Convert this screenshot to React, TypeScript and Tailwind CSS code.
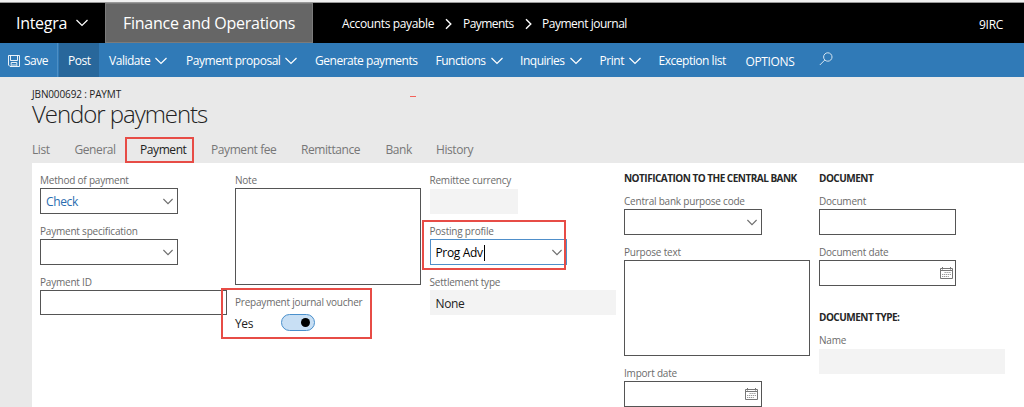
import type { ReactNode } from 'react';

function Chevron() {
  return (
    <svg viewBox="0 0 12 8" className="h-2 w-3 shrink-0" fill="none" stroke="currentColor" strokeWidth="1.2">
      <path d="M.5 1 6 6.5 11.5 1" />
    </svg>
  );
}

function FieldChevron() {
  return (
    <svg viewBox="0 0 10 7" className="mr-px h-[7px] w-[10px] shrink-0 text-[#6e6e6e]" fill="none" stroke="currentColor" strokeWidth="1.1">
      <path d="M.4 1 5 5.6 9.6 1" />
    </svg>
  );
}

function CrumbArrow() {
  return (
    <svg viewBox="0 0 7 12" className="h-3 w-[7px] shrink-0" fill="none" stroke="currentColor" strokeWidth="1.4">
      <path d="M1 1.2 5.8 6 1 10.8" />
    </svg>
  );
}

function FloppyIcon() {
  return (
    <svg viewBox="0 0 12 12" className="h-3 w-3 shrink-0" fill="none" stroke="currentColor" strokeWidth=".9">
      <path d="M.5.5h11v11h-9.5L.5 10z" />
      <path d="M2.5.5v5h7v-5M3.2 11.5v-4h5.6v4M5 9v2.5M7 9v2.5" />
    </svg>
  );
}

function CalendarIcon() {
  return (
    <svg viewBox="0 0 13 12" className="mb-px h-3 w-[13px] shrink-0 text-[#777]" fill="none" stroke="currentColor">
      <path d="M.5 1.5h12v10H.5z" strokeWidth="1" />
      <path d="M.5 3.5h12" strokeWidth="1" />
      <path d="M2.5 0v2.5M10.5 0v2.5" strokeWidth="1" />
      <path d="M4.5 5.5H11M2 7.5h9M2 9.5h6.8" strokeWidth="1.2" strokeDasharray="1.3 .7" opacity=".75" />
    </svg>
  );
}

function Label({ children }: { children: ReactNode }) {
  return <div className="h-4 whitespace-nowrap text-[10px] leading-4 tracking-[-0.21px] text-[#6b6b6b]">{children}</div>;
}

function Heading({ children }: { children: ReactNode }) {
  return <h2 className="h-[17px] whitespace-nowrap text-[10px] leading-[17px] font-bold tracking-[-0.51px] text-[#262626]">{children}</h2>;
}

function Field({ label, box, children }: { label: string; box: string; children?: ReactNode }) {
  return (
    <div>
      <Label>{label}</Label>
      <div className={`flex items-center justify-between text-[12px] leading-4 tracking-[-0.35px] ${box}`}>{children}</div>
    </div>
  );
}

const MENU = [
  { label: 'Validate', width: 'w-[77px]', chevron: true },
  { label: 'Payment proposal', width: 'w-[129px]', chevron: true },
  { label: 'Generate payments', width: 'w-[120.5px]', chevron: false },
  { label: 'Functions', width: 'w-[84.5px]', chevron: true },
  { label: 'Inquiries', width: 'w-[79.5px]', chevron: true },
  { label: 'Print', width: 'w-[59px]', chevron: true },
  { label: 'Exception list', width: 'w-[87px]', chevron: false },
  { label: 'OPTIONS', width: 'w-[73px] pt-0.5 tracking-[-0.35px]', chevron: false },
];

const TABS = [
  { label: 'List', width: 'w-[42.5px]' },
  { label: 'General', width: 'w-[65.5px]' },
  { label: 'Payment', width: 'w-[71px]', active: true },
  { label: 'Payment fee', width: 'w-[90px]' },
  { label: 'Remittance', width: 'w-[84.5px]' },
  { label: 'Bank', width: 'w-[50.5px]' },
  { label: 'History', width: 'w-[60px]' },
];

export default function App() {
  return (
    <div className="flex h-[407px] w-[1024px] flex-col overflow-hidden bg-[#e9e9e9] font-['Open_Sans','Noto_Sans',sans-serif]">
      <div className="h-[3px] shrink-0 border-b border-[#999] bg-[#f0f0f0]" />

      <header className="flex h-10 shrink-0 items-stretch bg-black text-white">
        <div className="flex w-[105px] items-center justify-between pr-[17px] pl-4 text-[16px] leading-5 tracking-[-0.3px]">
          Integra
          <Chevron />
        </div>
        <div className="flex w-52 items-center border border-[#7b7b7b] bg-[#666] pl-[17px] text-[16px] leading-5 tracking-[-0.25px] whitespace-nowrap">
          Finance and Operations
        </div>
        <nav className="flex grow items-center pt-px pl-[29px] text-[12px] whitespace-nowrap">
          <span className="w-[103px] tracking-[-0.37px]">Accounts payable</span>
          <CrumbArrow />
          <span className="ml-[11px] w-[62px] tracking-[-0.55px]">Payments</span>
          <CrumbArrow />
          <span className="ml-[10px] tracking-[-0.48px]">Payment journal</span>
        </nav>
        <div className="flex items-center pt-1 pr-[21px] text-[12px] tracking-[-0.3px]">9IRC</div>
      </header>

      <div className="flex h-[34px] shrink-0 items-stretch bg-[#307ab7] text-[12px] tracking-[-0.47px] whitespace-nowrap text-white">
        <div className="flex w-[58px] items-center gap-1 border-r border-[#4d8fc5] pt-px pl-2">
          <FloppyIcon />
          <span>Save</span>
        </div>
        <div className="ml-px flex w-10 items-center bg-[#28679b] pt-px pl-[9px]">Post</div>
        <div className="flex items-center pt-px pl-[10px]">
          {MENU.map((item) => (
            <div key={item.label} className={`flex shrink-0 items-center gap-[5px] ${item.width}`}>
              <span>{item.label}</span>
              {item.chevron && <Chevron />}
            </div>
          ))}
          <svg viewBox="0 0 14 14" className="mb-[3px] h-[14px] w-[14px]" fill="none" stroke="#d5e5f1" strokeWidth="1">
            <circle cx="8.8" cy="5" r="4.2" />
            <path d="M5.8 8 .8 13" />
          </svg>
        </div>
      </div>

      <div className="flex h-[86px] shrink-0 flex-col pl-8">
        <div className="mt-[9px] flex h-4 text-[10px] leading-4 tracking-[-0.13px] text-[#222]">
          <span className="w-[378px]">JBN000692 : PAYMT</span>
          <span className="mt-[10px] h-px w-[6px] bg-[#f4625a]" />
        </div>
        <h1 className="h-6 text-[24px] leading-6 font-light tracking-[-1.05px] text-[#222]">Vendor payments</h1>
        <nav className="mt-[11px] flex h-[26px] items-center text-[12px] tracking-[-0.42px] whitespace-nowrap text-[#777]">
          {TABS.map((tab) => (
            <div key={tab.label} className={`relative shrink-0 ${tab.width} ${tab.active ? 'text-[#222]' : ''}`}>
              {tab.label}
              {tab.active && <span className="absolute -top-1 -left-[15px] h-[26px] w-[69px] border-2 border-[#e74c46]" />}
            </div>
          ))}
        </nav>
      </div>

      <main className="ml-8 grid grow grid-cols-[195px_194.5px_194.5px_195px_200px] bg-white pl-2">
        <section className="flex flex-col gap-[9px] pt-[9px]">
          <Field label="Method of payment" box="h-[26px] w-[138px] border border-[#555] pl-[5px] pr-[3px] text-[#2a6db0]">
            <span className="pt-0.5">Check</span>
            <FieldChevron />
          </Field>
          <Field label="Payment specification" box="h-[26px] w-[138px] border border-[#555] pl-[5px] pr-[3px]">
            <span />
            <FieldChevron />
          </Field>
          <Field label="Payment ID" box="h-[25px] w-[187px] border border-[#555]" />
        </section>

        <section className="flex flex-col gap-[9px] pt-[9px]">
          <Field label="Note" box="h-[97px] w-[186px] border border-[#555]" />
          <div className="relative">
            <Label>Prepayment journal voucher</Label>
            <div className="mt-1 flex h-[17px] items-center text-[12px] leading-4 tracking-[-0.4px] text-[#222]">
              <span className="w-[46px] pt-0.5">Yes</span>
              <span className="flex h-[17px] w-[34px] items-center justify-end rounded-full border border-[#4a90cc] bg-[#c8dff4] pr-1">
                <span className="h-[9px] w-[9px] rounded-full bg-black" />
              </span>
            </div>
            <span className="absolute -top-[6px] -left-[14px] h-[51px] w-[151px] border-2 border-[#e74c46]" />
          </div>
        </section>

        <section className="flex flex-col gap-[9px] pt-[9px]">
          <Field label="Remittee currency" box="h-[26px] w-[88px] border-t border-white bg-[#f3f3f3]" />
          <div className="relative">
            <Field label="Posting profile" box="h-[26px] w-[137px] border border-[#4f8fca] pl-[5px] pr-[3px] text-black">
              <span className="flex items-center pt-0.5">
                Prog Adv
                <span className="ml-px h-4 w-px bg-black" />
              </span>
              <FieldChevron />
            </Field>
            <span className="absolute -top-[3px] -left-[8px] h-[50px] w-[144px] border-2 border-[#e74c46]" />
          </div>
          <Field label="Settlement type" box="h-[25px] w-[186px] bg-[#f3f3f3] pl-[6px] text-[#222]">
            <span className="pt-0.5">None</span>
          </Field>
        </section>

        <section className="flex flex-col pt-[7px]">
          <Heading>NOTIFICATION TO THE CENTRAL BANK</Heading>
          <div className="mt-[6px] flex flex-col gap-[9px]">
            <Field label="Central bank purpose code" box="h-[26px] w-[138px] border border-[#555] pr-[3px]">
              <span />
              <FieldChevron />
            </Field>
            <Field label="Purpose text" box="h-24 w-[186px] border border-[#555]" />
            <Field label="Import date" box="h-[26px] w-[138px] border border-[#555] pr-[3px]">
              <span />
              <CalendarIcon />
            </Field>
          </div>
        </section>

        <section className="flex flex-col pt-[7px]">
          <Heading>DOCUMENT</Heading>
          <div className="mt-[6px] flex flex-col gap-[9px]">
            <Field label="Document" box="h-[26px] w-[137px] border border-[#555]" />
            <Field label="Document date" box="h-[26px] w-[137px] border border-[#555] pr-[2px]">
              <span />
              <CalendarIcon />
            </Field>
          </div>
          <div className="mt-[23px]">
            <Heading>DOCUMENT TYPE:</Heading>
          </div>
          <div className="mt-[6px]">
            <Field label="Name" box="mt-px h-[25px] w-[186px] bg-[#f3f3f3]" />
          </div>
        </section>
      </main>
    </div>
  );
}
